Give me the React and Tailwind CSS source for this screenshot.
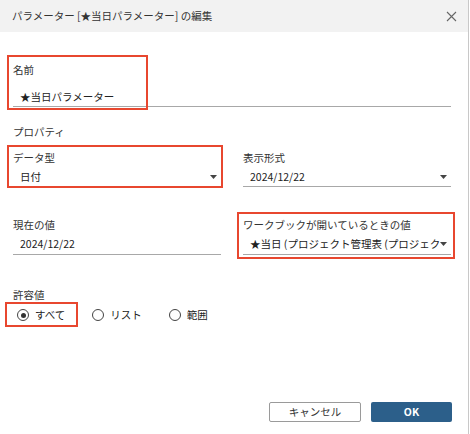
import React from "react";

const font = { fontFamily: '"Noto Sans CJK JP", "Noto Sans", sans-serif' };

function Arrow() {
  return (
    <svg width="7" height="4" viewBox="0 0 7 4" className="shrink-0">
      <path d="M0 0 L7 0 L3.5 4 Z" fill="#444" />
    </svg>
  );
}

function Field({ label, value, dropdown, pt = "pt-[5px]", pb = "pb-[2px]" }) {
  return (
    <div className="flex flex-col">
      <div className="h-[14px] leading-[14px] text-[10.5px] text-[#333]">{label}</div>
      <div className={`${pt} ${pb} border-b border-[#a8a8a8] flex items-center pl-[7px] pr-[4px]`}>
        <div className="flex-1 min-w-0 overflow-hidden whitespace-nowrap h-[14px] leading-[14px] text-[10.5px] text-[#222]">
          {value}
        </div>
        {dropdown && <Arrow />}
      </div>
    </div>
  );
}

function Radio({ checked, label }) {
  return (
    <div className="flex items-center gap-[6px]">
      <div className="w-[12px] h-[12px] rounded-full border border-[#444] flex items-center justify-center">
        {checked && <div className="w-[5px] h-[5px] rounded-full bg-[#333]" />}
      </div>
      <span className="text-[10.5px] leading-[14px] text-[#222]">{label}</span>
    </div>
  );
}

function RedBox({ className }) {
  return <div className={`absolute border-2 border-[#e8472f] pointer-events-none ${className}`} />;
}

export default function App() {
  return (
    <div className="w-[470px] h-[434px] bg-white relative overflow-hidden" style={font}>
      <div className="w-[469px] h-full border-r border-[#c8c8c8] flex flex-col">
        <div className="h-[32px] bg-[#f2f2f2] flex items-center justify-between pl-[12px] pr-[11px] shrink-0">
          <span className="text-[10.5px] text-[#333]">パラメーター [★当日パラメーター] の編集</span>
          <svg width="11" height="11" viewBox="0 0 11 11">
            <path d="M1 1 L10 10 M10 1 L1 10" stroke="#666" strokeWidth="1.1" />
          </svg>
        </div>

        <div className="pl-[13px] pr-[17px] flex flex-col flex-1">
          <div className="relative mt-[31px]">
            <div className="h-[14px] leading-[14px] text-[10.5px] text-[#333]">名前</div>
            <div className="pt-[13px] pb-[2px] border-b border-[#a8a8a8] pl-[7px]">
              <div className="h-[14px] leading-[14px] text-[10.5px] text-[#222]">★当日パラメーター</div>
            </div>
            <RedBox className="left-[-6px] top-[-8px] w-[141px] h-[55px]" />
          </div>

          <div className="mt-[18px] h-[14px] leading-[14px] text-[10.5px] text-[#333]">プロパティ</div>

          <div className="grid grid-cols-2 gap-x-[22px] mt-[12px]">
            <div className="relative">
              <Field label="データ型" value="日付" dropdown />
              <RedBox className="left-[-6px] top-[-6px] w-[216px] h-[43px]" />
            </div>
            <Field label="表示形式" value="2024/12/22" dropdown />
          </div>

          <div className="grid grid-cols-2 gap-x-[22px] mt-[31px]">
            <Field label="現在の値" value="2024/12/22" pb="pb-[3px]" />
            <div className="relative">
              <Field
                label="ワークブックが開いているときの値"
                value="★当日 (プロジェクト管理表 (プロジェクト管理表))"
                dropdown
                pb="pb-[3px]"
              />
              <RedBox className="left-[-6px] top-[-6px] w-[218px] h-[47px]" />
            </div>
          </div>

          <div className="mt-[33px] h-[14px] leading-[14px] text-[10.5px] text-[#333]">許容値</div>
          <div className="relative mt-[6px] flex items-center gap-[27px] pl-[4px] h-[14px]">
            <Radio checked label="すべて" />
            <Radio label="リスト" />
            <Radio label="範囲" />
            <RedBox className="left-[-8px] top-[-6px] w-[73px] h-[25px]" />
          </div>

          <div className="flex-1" />

          <div className="flex justify-end gap-[10px] pb-[12px] mr-[-1px]">
            <button className="w-[92px] h-[20px] border border-[#9a9a9a] rounded-[2px] bg-white text-[10.5px] text-[#333] flex items-center justify-center">
              キャンセル
            </button>
            <button className="w-[81px] h-[20px] rounded-[2px] bg-[#2c5f8a] text-[10.5px] font-bold text-white flex items-center justify-center">
              OK
            </button>
          </div>
        </div>
      </div>
    </div>
  );
}
